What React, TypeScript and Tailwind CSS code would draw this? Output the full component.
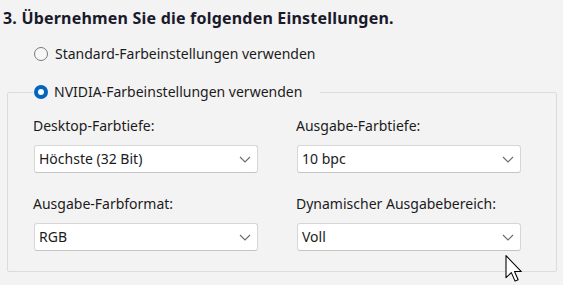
const font = { fontFamily: '"Noto Sans", "Open Sans", sans-serif' }

function Radio({ checked }: { checked?: boolean }) {
  return checked ? (
    <span className="flex h-[14px] w-[14px] shrink-0 items-center justify-center rounded-full bg-[#0067c0]">
      <span className="h-[6px] w-[6px] rounded-full bg-white" />
    </span>
  ) : (
    <span className="h-[14px] w-[14px] shrink-0 rounded-full border-[1.5px] border-[#7a7a7a] bg-[#f7f7f7]" />
  )
}

function Chevron() {
  return (
    <svg width="12" height="7" viewBox="0 0 12 7" className="shrink-0">
      <path d="M1 1 L6 6 L11 1" fill="none" stroke="#6b6b6b" strokeWidth="1.1" />
    </svg>
  )
}

function Dropdown({ value }: { value: string }) {
  return (
    <div className="flex h-[28px] w-[224px] items-center justify-between rounded-[3px] border border-[#d6d6d6] border-b-[#c4c4c4] bg-white pl-[4px] pr-[6px]">
      <span className="text-[14px] leading-[20px] text-[#1b1b1b]">{value}</span>
      <Chevron />
    </div>
  )
}

function Field({ label, value }: { label: string; value: string }) {
  return (
    <div className="flex flex-col">
      <div className="text-[14px] leading-[20px] text-[#1b1b1b]">{label}</div>
      <div className="mt-[9px] pl-[1px]">
        <Dropdown value={value} />
      </div>
    </div>
  )
}

export default function App() {
  return (
    <div className="relative h-[285px] w-[563px] overflow-hidden bg-[#f3f3f3] text-[#1b1b1b]" style={font}>
      <div className="pl-[3px] pt-[8px] text-[16px] font-bold leading-[20px] tracking-[0.2px] text-[#1a1a2a]">
        3. Übernehmen Sie die folgenden Einstellungen.
      </div>

      <div className="mt-[16px] flex items-center gap-[7px] pl-[34px] text-[14px] leading-[20px]">
        <Radio />
        <span>Standard-Farbeinstellungen verwenden</span>
      </div>

      <fieldset className="ml-[7px] mt-[18px] w-[550px] rounded-[2px] border border-[#dcdcdc] pb-[20px] pl-[25px]">
        <legend className="flex items-center gap-[6px] pl-[1px] pr-[18px] text-[14px] leading-[20px]">
          <Radio checked />
          <span>NVIDIA-Farbeinstellungen verwenden</span>
        </legend>

        <div className="grid grid-cols-[224px_224px] gap-x-[39px] gap-y-[21px] pt-[14px]">
          <Field label="Desktop-Farbtiefe:" value="Höchste (32 Bit)" />
          <Field label="Ausgabe-Farbtiefe:" value="10 bpc" />
          <Field label="Ausgabe-Farbformat:" value="RGB" />
          <Field label="Dynamischer Ausgabebereich:" value="Voll" />
        </div>
      </fieldset>

      {/* mouse pointer */}
      <svg
        className="absolute left-[505px] top-[255px]"
        width="18"
        height="28"
        viewBox="0 0 13 21"
      >
        <path
          d="M0.5 0.5 L0.5 17 L4.5 13.2 L7.3 19.6 L9.6 18.6 L6.9 12.4 L12 12.4 Z"
          fill="#fff"
          stroke="#000"
          strokeWidth="0.8"
          strokeLinejoin="round"
        />
      </svg>
    </div>
  )
}
